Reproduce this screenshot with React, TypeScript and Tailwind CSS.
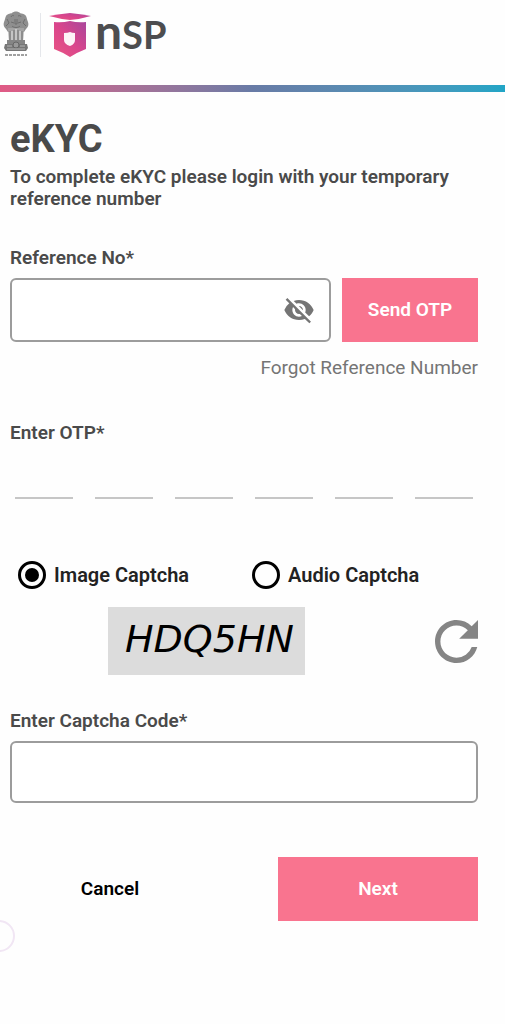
import { useState } from 'react';
import { MdVisibility, MdVisibilityOff } from 'react-icons/md';
import clsx from 'clsx';

const OTP_LENGTH = 6;
const CAPTCHA_TYPES = ['Image Captcha', 'Audio Captcha'];

function Emblem() {
  return (
    <svg viewBox="0 0 28 48" className="w-7 h-12 shrink-0" aria-hidden="true">
      <path d="M4 5C6 2 9 3 10 2c2-2 6-2 8 0 1 1 4 0 6 3 1 2 1 4 2 6 1 3 0 5-2 7l-2 3H6l-2-3c-2-2-3-4-2-7 1-2 1-4 2-6Z" fill="#8f8f8f" />
      <path d="M6 17h16l-1 14H7Z" fill="#a4a4a4" />
      <path d="M9 6c1-2 2-2 3-1M16 5c2-1 3 0 3 1M9 11l3 1M16 12l3-1M13 8v5h2V8M5 8l2 4-3 3M23 8l-2 4 3 3M10 15c2 2 6 2 8 0" stroke="#6e6e6e" strokeWidth="1" fill="none" />
      <path d="M8 20v10M12 19v10M16 19v10M20 20v10" stroke="#777" strokeWidth="1" />
      <path d="M10 20v9M14 18v11M18 20v9" stroke="#e8e8e8" strokeWidth="1" />
      <path d="M5 29h18v4H5Z" fill="#858585" />
      <path d="M3 33h22l1 4-2 3H4l-2-3Z" fill="#777" />
      <circle cx="14" cy="34" r="3" fill="#999" stroke="#666" />
      <path d="M5 35h5M18 35h5M5 38h18" stroke="#b5b5b5" strokeWidth="1" />
      <path d="M3 44h22" stroke="#a0a0a0" strokeWidth="2" strokeDasharray="3 1" />
    </svg>
  );
}

function NspMark() {
  return (
    <svg viewBox="0 0 42 46" className="w-[42px] h-[46px] shrink-0" aria-hidden="true">
      <defs>
        <linearGradient id="nsp" x1="0" y1="1" x2="1" y2="0">
          <stop offset="0" stopColor="#ea5583" />
          <stop offset="0.5" stopColor="#d9458c" />
          <stop offset="1" stopColor="#a8479c" />
        </linearGradient>
      </defs>
      <path d="M0 4Q11 2 21 1q10 1 21 3-10 3-21 4Q11 7 0 4Z" fill="url(#nsp)" />
      <path d="M5 10q8 1 16-1 8 2 16 1v27q-8 3-16 8-8-5-16-8Z" fill="url(#nsp)" />
      <path d="M15 21q4 0 6-1 2 1 5 1v7q0 4-5 6-6-2-6-6Z" fill="#fdf3f8" />
    </svg>
  );
}

function Header() {
  return (
    <header>
      <div className="flex items-center h-[85px] pl-0.5 pb-4">
        <Emblem />
        <div className="w-px h-11 ml-2.5 bg-gray-200" />
        <div className="flex items-center ml-2">
          <NspMark />
          <div className="ml-1 pb-2 leading-none font-bold font-['Lato',sans-serif] text-[#4d4d4f]">
            <span className="text-5xl leading-none">n</span>
            <span className="text-[38px]">SP</span>
          </div>
        </div>
      </div>
      <div className="h-[7px] bg-linear-to-r from-[#e05a85] via-[#687ba6] to-[#20a5c6]" />
    </header>
  );
}

export default function App() {
  const [hidden, setHidden] = useState(true);
  const [captchaType, setCaptchaType] = useState(CAPTCHA_TYPES[0]);
  const EyeIcon = hidden ? MdVisibilityOff : MdVisibility;

  return (
    <div className="relative min-h-screen overflow-hidden bg-[#fefefe] font-['Roboto',sans-serif] text-[#4a4a4a]">
      <Header />

      <form className="pl-2.5 pr-[27px] pt-6" onSubmit={(e) => e.preventDefault()}>
        <h1 className="text-[38px] leading-[46px] font-bold">eKYC</h1>
        <p className="mt-1 text-[19px] leading-[22px] font-semibold">
          To complete eKYC please login with your temporary reference number
        </p>

        {/* Reference number */}
        <label htmlFor="reference" className="block mt-9 text-[19px] leading-6 font-semibold">Reference No*</label>
        <div className="flex gap-[11px] mt-2">
          <div className="relative flex-1 min-w-0">
            <input
              id="reference"
              type={hidden ? 'password' : 'text'}
              className="block w-full h-16 pl-3 pr-14 border-2 border-[#9c9c9c] rounded-md bg-white"
            />
            <button
              type="button"
              aria-label="Show reference number"
              onClick={() => setHidden(!hidden)}
              className="absolute right-4 inset-y-0 text-[#757575]"
            >
              <EyeIcon size={32} />
            </button>
          </div>
          <button type="button" className="w-34 h-16 bg-[#f9748f] text-white text-[19px] font-semibold">Send OTP</button>
        </div>
        <div className="mt-3.5 text-right">
          <a href="#forgot" className="inline-block text-[19px] leading-6 text-[#757575]">Forgot Reference Number</a>
        </div>

        {/* OTP */}
        <fieldset className="mt-10 min-w-0">
          <legend className="text-[19px] leading-6 font-semibold">Enter OTP*</legend>
          <div className="flex gap-[22px] mt-3.5 px-[5px]">
            {Array.from({ length: OTP_LENGTH }).map((_, i) => (
              <input
                key={i}
                aria-label={`OTP digit ${i + 1}`}
                maxLength={1}
                inputMode="numeric"
                className="flex-1 min-w-0 h-10 border-b-2 border-[#c6c6c6] text-center text-[19px]"
              />
            ))}
          </div>
        </fieldset>

        {/* Captcha */}
        <div className="grid grid-cols-2 mt-[62px]">
          {CAPTCHA_TYPES.map((type) => (
            <label key={type} className="flex items-center gap-2 pl-2 text-xl leading-7 font-semibold text-[#222]">
              <input
                type="radio"
                name="captcha"
                checked={captchaType === type}
                onChange={() => setCaptchaType(type)}
                className={clsx(
                  'appearance-none grid place-content-center size-7 shrink-0 rounded-full border-3 border-black',
                  "checked:before:content-[''] checked:before:size-3.5 checked:before:rounded-full checked:before:bg-black"
                )}
              />
              {type}
            </label>
          ))}
        </div>
        <div className="flex items-center mt-[18px]">
          <div className="flex-1 flex justify-center">
            <div className="w-[197px] h-[68px] pb-1 pl-1.5 flex items-center justify-center bg-[#dcdcdc] text-black text-[38px] italic font-['DejaVu_Sans',sans-serif]">
              HDQ5HN
            </div>
          </div>
          <button type="button" aria-label="Refresh captcha" className="w-[75px] flex justify-end text-[#858585]">
            <svg viewBox="4 4 16 16" className="size-[43px]" fill="currentColor">
              <path d="M17.65 6.35A7.958 7.958 0 0 0 12 4c-4.42 0-7.99 3.58-7.99 8s3.57 8 7.99 8c3.73 0 6.84-2.55 7.73-6h-2.08A5.99 5.99 0 0 1 12 18c-3.31 0-6-2.69-6-6s2.69-6 6-6c1.66 0 3.14.69 4.22 1.78L13 11h7V4l-2.35 2.35z" />
            </svg>
          </button>
        </div>

        <label htmlFor="code" className="block mt-[34px] text-[19px] leading-6 font-semibold">Enter Captcha Code*</label>
        <input id="code" className="block w-full h-[62px] mt-2 px-3 border-2 border-[#9c9c9c] rounded-md bg-white" />

        <div className="flex justify-between mt-[54px] text-[19px] font-semibold">
          <button type="button" className="w-[200px] h-16 text-black">Cancel</button>
          <button type="submit" className="w-[200px] h-16 bg-[#f9748f] text-white">Next</button>
        </div>
      </form>

      {/* Edge handle, half off screen */}
      <div className="absolute -left-[17px] top-[920px] size-8 rounded-full border-2 border-[#f1e6f4]" />
    </div>
  );
}
